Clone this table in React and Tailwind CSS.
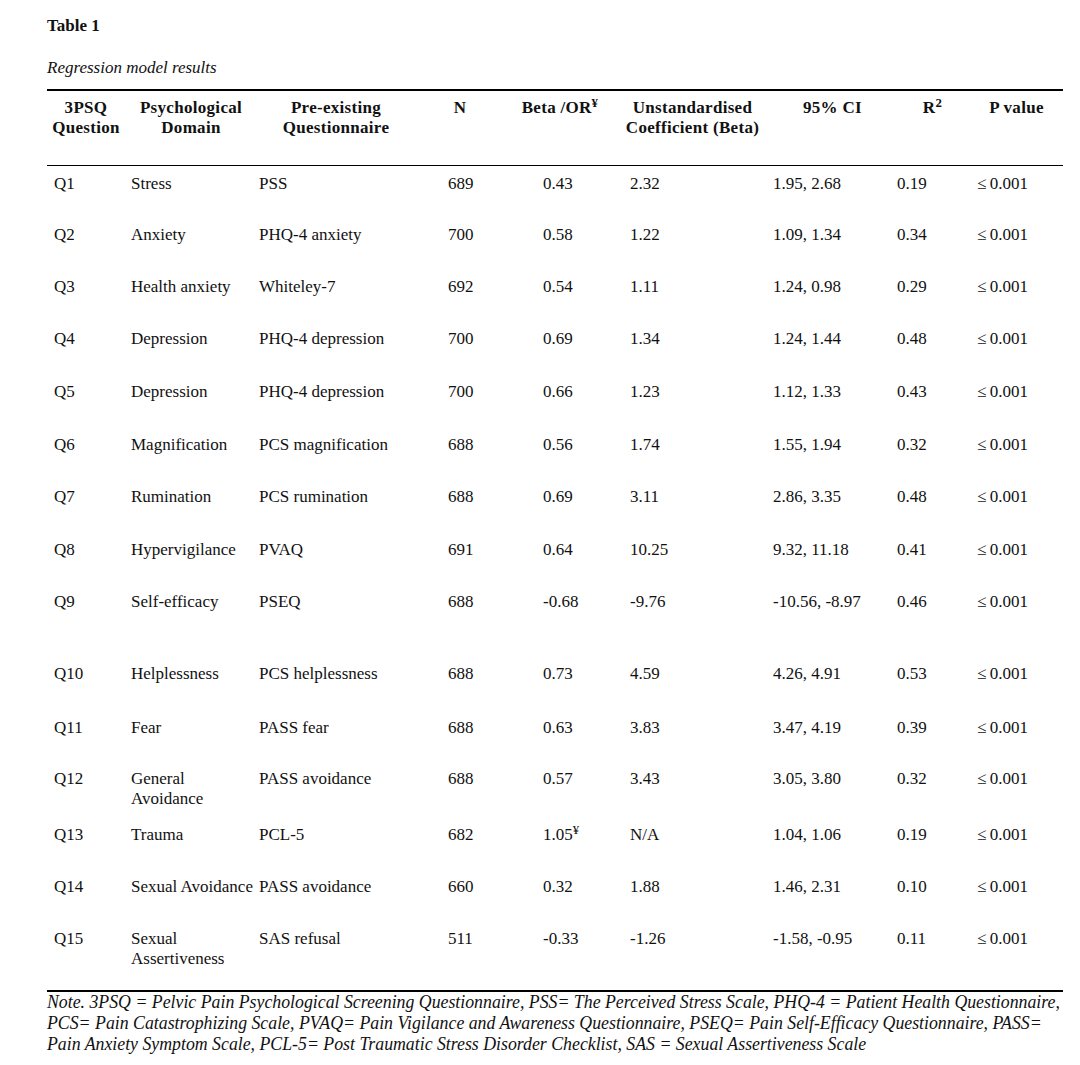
const cols = "grid grid-cols-[78px_132px_158px_90px_110px_155px_125px_75px_93px]";

const rows = [
  { h: "h-[51px]", q: "Q1", d: "Stress", p: "PSS", n: "689", b: "0.43", u: "2.32", ci: "1.95, 2.68", r: "0.19" },
  { h: "h-[52px]", q: "Q2", d: "Anxiety", p: "PHQ-4 anxiety", n: "700", b: "0.58", u: "1.22", ci: "1.09, 1.34", r: "0.34" },
  { h: "h-[52px]", q: "Q3", d: "Health anxiety", p: "Whiteley-7", n: "692", b: "0.54", u: "1.11", ci: "1.24, 0.98", r: "0.29" },
  { h: "h-[53px]", q: "Q4", d: "Depression", p: "PHQ-4 depression", n: "700", b: "0.69", u: "1.34", ci: "1.24, 1.44", r: "0.48" },
  { h: "h-[53px]", q: "Q5", d: "Depression", p: "PHQ-4 depression", n: "700", b: "0.66", u: "1.23", ci: "1.12, 1.33", r: "0.43" },
  { h: "h-[52px]", q: "Q6", d: "Magnification", p: "PCS magnification", n: "688", b: "0.56", u: "1.74", ci: "1.55, 1.94", r: "0.32" },
  { h: "h-[53px]", q: "Q7", d: "Rumination", p: "PCS rumination", n: "688", b: "0.69", u: "3.11", ci: "2.86, 3.35", r: "0.48" },
  { h: "h-[52px]", q: "Q8", d: "Hypervigilance", p: "PVAQ", n: "691", b: "0.64", u: "10.25", ci: "9.32, 11.18", r: "0.41" },
  { h: "h-[72px]", q: "Q9", d: "Self-efficacy", p: "PSEQ", n: "688", b: "-0.68", u: "-9.76", ci: "-10.56, -8.97", r: "0.46" },
  { h: "h-[54px]", q: "Q10", d: "Helplessness", p: "PCS helplessness", n: "688", b: "0.73", u: "4.59", ci: "4.26, 4.91", r: "0.53" },
  { h: "h-[51px]", q: "Q11", d: "Fear", p: "PASS fear", n: "688", b: "0.63", u: "3.83", ci: "3.47, 4.19", r: "0.39" },
  { h: "h-[56px]", q: "Q12", d: ["General", "Avoidance"], p: "PASS avoidance", n: "688", b: "0.57", u: "3.43", ci: "3.05, 3.80", r: "0.32" },
  { h: "h-[52px]", q: "Q13", d: "Trauma", p: "PCL-5", n: "682", b: "1.05", sup: true, u: "N/A", ci: "1.04, 1.06", r: "0.19" },
  { h: "h-[52px]", q: "Q14", d: "Sexual Avoidance", p: "PASS avoidance", n: "660", b: "0.32", u: "1.88", ci: "1.46, 2.31", r: "0.10" },
  { h: "h-[69px]", q: "Q15", d: ["Sexual", "Assertiveness"], p: "SAS refusal", n: "511", b: "-0.33", u: "-1.26", ci: "-1.58, -0.95", r: "0.11" },
];

const App = () => {
  return (
    <div className="min-h-[1065px] bg-white text-[#111] font-['Liberation_Serif','Times_New_Roman',serif] text-[17px] leading-[20px] pl-[47px] pt-[16px]">
      <h1 className="font-bold">Table 1</h1>
      <p className="italic mt-[22px]">Regression model results</p>

      <div className="w-[1016px] mt-[11px] border-t-2 border-b-2 border-black">
        <div className={`${cols} h-[75px] pt-[7px] border-b border-black font-bold tracking-[0.3px] text-center`}>
          <div>3PSQ<br />Question</div>
          <div>Psychological<br />Domain</div>
          <div>Pre-existing<br />Questionnaire</div>
          <div>N</div>
          <div>Beta /OR<sup>¥</sup></div>
          <div>Unstandardised<br />Coefficient (Beta)</div>
          <div>95% CI</div>
          <div>R<sup>2</sup></div>
          <div>P value</div>
        </div>

        {rows.map((row) => (
          <div key={row.q} className={`${cols} ${row.h} pt-[8px]`}>
            <div className="pl-[7px]">{row.q}</div>
            <div className="pl-[6px] whitespace-nowrap">
              {Array.isArray(row.d) ? (
                <>
                  {row.d[0]}
                  <br />
                  {row.d[1]}
                </>
              ) : (
                row.d
              )}
            </div>
            <div className="pl-[2px]">{row.p}</div>
            <div className="pl-[33px]">{row.n}</div>
            <div className="pl-[38px]">
              {row.b}
              {row.sup && <sup>¥</sup>}
            </div>
            <div className="pl-[15px]">{row.u}</div>
            <div className="pl-[3px]">{row.ci}</div>
            <div className="pl-[2px]">{row.r}</div>
            <div className="pl-[7px]">≤&#8201;0.001</div>
          </div>
        ))}
      </div>

      <div className="w-[1016px] italic text-[17.8px] leading-[21px] whitespace-nowrap">
        Note. 3PSQ = Pelvic Pain Psychological Screening Questionnaire, PSS= The Perceived Stress Scale, PHQ-4 = Patient Health Questionnaire,
        <br />
        PCS= Pain Catastrophizing Scale, PVAQ= Pain Vigilance and Awareness Questionnaire, PSEQ= Pain Self-Efficacy Questionnaire, PASS=
        <br />
        Pain Anxiety Symptom Scale, PCL-5= Post Traumatic Stress Disorder Checklist, SAS = Sexual Assertiveness Scale
      </div>
    </div>
  );
};

export default App;
